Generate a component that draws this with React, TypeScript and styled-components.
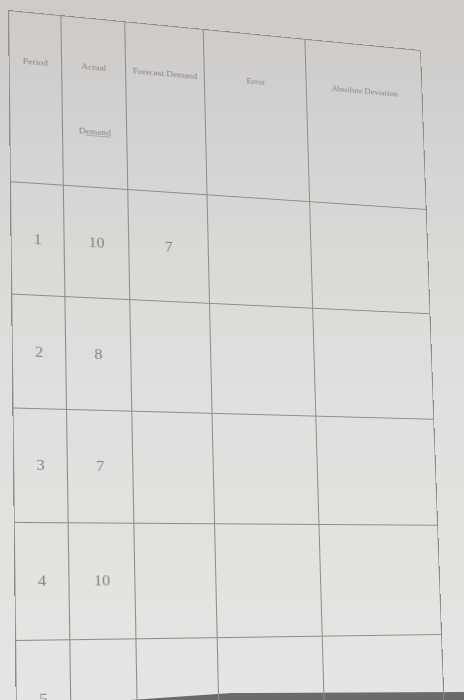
import React from 'react'
import styled, { createGlobalStyle } from 'styled-components'

const GlobalStyle = createGlobalStyle`
    html, body {
        margin: 0;
        padding: 0;
    }

    body {
        background-color: #d8d8d6;
        font-family: "Liberation Serif", "Times New Roman", serif;
    }
`

// flat size of the sheet (header + four full rows) and where its corners land in the photo
const SHEET_W = 412
const SHEET_H = 627
const PHOTO_CORNERS: [number, number][] = [
    [8, 10],
    [420, 50],
    [15, 640],
    [441, 634],
]

const solve = (a: number[][], b: number[]) => {
    const n = b.length
    const m = a.map((row, i) => [...row, b[i]])
    for (let c = 0; c < n; c++) {
        let pivot = c
        for (let r = c + 1; r < n; r++) {
            if (Math.abs(m[r][c]) > Math.abs(m[pivot][c])) pivot = r
        }
        ;[m[c], m[pivot]] = [m[pivot], m[c]]
        for (let r = 0; r < n; r++) {
            if (r === c) continue
            const f = m[r][c] / m[c][c]
            for (let k = c; k <= n; k++) m[r][k] -= f * m[c][k]
        }
    }
    return m.map((row, i) => row[n] / row[i])
}

const perspectiveMatrix = () => {
    const src: [number, number][] = [
        [0, 0],
        [SHEET_W, 0],
        [0, SHEET_H],
        [SHEET_W, SHEET_H],
    ]
    const a: number[][] = []
    const b: number[] = []
    src.forEach(([x, y], i) => {
        const [u, v] = PHOTO_CORNERS[i]
        a.push([x, y, 1, 0, 0, 0, -u * x, -u * y])
        b.push(u)
        a.push([0, 0, 0, x, y, 1, -v * x, -v * y])
        b.push(v)
    })
    const h = solve(a, b)
    return `matrix3d(${h[0]}, ${h[3]}, 0, ${h[6]}, ${h[1]}, ${h[4]}, 0, ${h[7]}, 0, 0, 1, 0, ${h[2]}, ${h[5]}, 0, 1)`
}

const Page = styled.div`
    position: relative;
    width: 464px;
    height: 700px;
    overflow: hidden;
    display: flex;
    flex-direction: column;
    background: linear-gradient(180deg, #cdcac8 0%, #d6d5d3 25%, #dfe0dd 55%, #e3e6e2 100%);
`

const Desk = styled.div`
    flex: 1;
    min-height: 0;
`

const Sheet = styled.div<{ $matrix: string }>`
    width: ${SHEET_W}px;
    box-sizing: border-box;
    display: grid;
    grid-template-columns: 49px 61px 77px 103px 122px;
    grid-template-rows: 175px 113px 113px 112px 114px 114px;
    border-top: 1px solid #8d8c8a;
    border-left: 1px solid #8d8c8a;
    transform-origin: 0 0;
    transform: ${({ $matrix }) => $matrix};
`

const Cell = styled.div`
    box-sizing: border-box;
    border-right: 1px solid #8d8c8a;
    border-bottom: 1px solid #8d8c8a;
    display: flex;
    align-items: center;
    justify-content: center;
    color: #7e7e7e;
    font-size: 15px;
`

const HeadCell = styled(Cell)`
    flex-direction: column;
    justify-content: flex-start;
    padding-top: 45px;
    font-size: 9px;
    line-height: 11px;
    color: #858382;
    white-space: nowrap;
`

const SecondLine = styled.span`
    margin-top: 56px;

    u {
        text-decoration-color: #a6a6a6;
    }
`

const Bezel = styled.svg`
    display: block;
    flex: none;
`

const rows = [
    { period: '1', actual: '10', forecast: '7' },
    { period: '2', actual: '8', forecast: '' },
    { period: '3', actual: '7', forecast: '' },
    { period: '4', actual: '10', forecast: '' },
    { period: '5', actual: '', forecast: '' },
]

const App = () => {
    const matrix = React.useMemo(perspectiveMatrix, [])

    return (
        <Page>
            <GlobalStyle />
            <Desk>
                <Sheet $matrix={matrix}>
                    <HeadCell>Period</HeadCell>
                    <HeadCell>
                        <span>Actual</span>
                        <SecondLine>D<u>emand</u></SecondLine>
                    </HeadCell>
                    <HeadCell>Forecast Demand</HeadCell>
                    <HeadCell>Error</HeadCell>
                    <HeadCell>Absolute Deviation</HeadCell>
                    {rows.map(row => (
                        <React.Fragment key={row.period}>
                            <Cell>{row.period}</Cell>
                            <Cell>{row.actual}</Cell>
                            <Cell>{row.forecast}</Cell>
                            <Cell />
                            <Cell />
                        </React.Fragment>
                    ))}
                </Sheet>
            </Desk>
            <Bezel width="464" height="8" viewBox="0 0 464 8">
                <polygon points="130,8 232,1 464,0 464,8" fill="#6b6b6a" />
            </Bezel>
        </Page>
    )
}

export default App
